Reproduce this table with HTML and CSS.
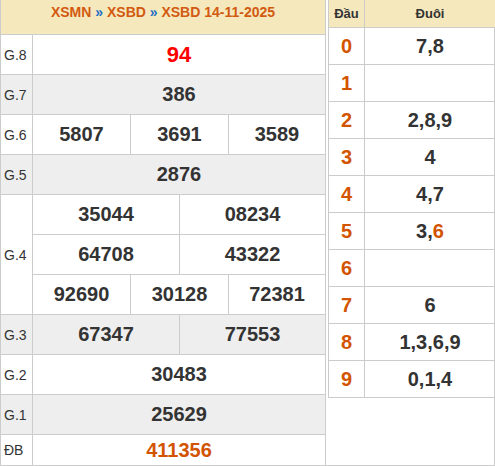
FILE: index.html
```html
<!DOCTYPE html>
<html lang="vi">
<head>
<meta charset="utf-8">
<title>XSBD 14-11-2025</title>
<link rel="stylesheet" href="styles.css">
</head>
<body>
<div class="wrap">
  <div class="kq">
    <div class="kq-head"><span class="lnk">XSMN</span> <span class="sep">»</span> <span class="lnk">XSBD</span> <span class="sep">»</span> <span class="lnk">XSBD 14-11-2025</span></div>

    <div class="lbl">G.8</div>
    <div class="num full g8">94</div>

    <div class="lbl gray">G.7</div>
    <div class="num full gray">386</div>

    <div class="lbl">G.6</div>
    <div class="num t1">5807</div>
    <div class="num t2">3691</div>
    <div class="num t3">3589</div>

    <div class="lbl gray">G.5</div>
    <div class="num full gray">2876</div>

    <div class="lbl span3">G.4</div>
    <div class="num h1">35044</div>
    <div class="num h2">08234</div>
    <div class="num h1">64708</div>
    <div class="num h2">43322</div>
    <div class="num t1">92690</div>
    <div class="num t2">30128</div>
    <div class="num t3">72381</div>

    <div class="lbl gray">G.3</div>
    <div class="num h1 gray">67347</div>
    <div class="num h2 gray">77553</div>

    <div class="lbl">G.2</div>
    <div class="num full">30483</div>

    <div class="lbl gray">G.1</div>
    <div class="num full gray">25629</div>

    <div class="lbl">ĐB</div>
    <div class="num full db">411356</div>
  </div>

  <div class="side">
    <div class="lt">
      <div class="lt-h dau">Đầu</div>
      <div class="lt-h duoi">Đuôi</div>

      <div class="d">0</div><div class="t">7,8</div>
      <div class="d">1</div><div class="t"></div>
      <div class="d">2</div><div class="t">2,8,9</div>
      <div class="d">3</div><div class="t">4</div>
      <div class="d">4</div><div class="t">4,7</div>
      <div class="d">5</div><div class="t">3,<span class="hl">6</span></div>
      <div class="d">6</div><div class="t"></div>
      <div class="d">7</div><div class="t">6</div>
      <div class="d">8</div><div class="t">1,3,6,9</div>
      <div class="d">9</div><div class="t">0,1,4</div>
    </div>
  </div>
</div>
</body>
</html>
```

FILE: styles.css
```css
* { box-sizing: border-box; }
html, body { margin: 0; padding: 0; background: #fff; }
body {
  font-family: "Liberation Sans", Arial, sans-serif;
  color: #333;
}
.wrap {
  display: flex;
  width: 495px;
  height: 466px;
}

/* left results grid */
.kq {
  width: 326px;
  display: grid;
  grid-template-columns: 32px 98px 49px 49px 97px;
  grid-template-rows: 35px repeat(10, 40px) 31px;
  border-left: 1px solid #ccc;
}
.kq > div {
  border-right: 1px solid #ccc;
  border-bottom: 1px solid #ccc;
}
.kq-head {
  grid-column: 1 / -1;
  background: #f6e8bd;
  text-align: center;
  font-weight: bold;
  font-size: 14px;
  line-height: 16px;
  padding-top: 4px;
  color: #d15a10;
}
.kq-head .sep { color: #1f6fc5; }
.lbl {
  grid-column: 1 / 2;
  display: flex;
  align-items: center;
  padding-left: 3px;
  font-size: 14px;
  color: #333;
}
.span3 { grid-row: span 3; }
.num {
  display: flex;
  align-items: center;
  justify-content: center;
  font-weight: bold;
  font-size: 20px;
  color: #333;
}
.full { grid-column: 2 / 6; }
.t1 { grid-column: 2 / 3; }
.t2 { grid-column: 3 / 5; }
.t3 { grid-column: 5 / 6; }
.h1 { grid-column: 2 / 4; }
.h2 { grid-column: 4 / 6; }
.gray { background: #eeeeee; }
.g8 { color: #f00; font-size: 22px; }
.db { color: #d35400; }

/* right loto table */
.side {
  width: 169px;
  padding-left: 2px;
  border-right: 1px solid #ccc;
  border-bottom: 1px solid #ccc;
}
.lt {
  display: grid;
  grid-template-columns: 36px 130px;
  grid-template-rows: 28px repeat(10, 37px);
  border-left: 1px solid #ccc;
}
.lt > div {
  border-bottom: 1px solid #ccc;
  display: flex;
  align-items: center;
  justify-content: center;
}
.lt-h {
  background: #f6e8bd;
  font-weight: bold;
  font-size: 13px;
  color: #333;
  padding-bottom: 1px;
}
.dau, .d { border-right: 1px solid #ccc; }
.d {
  font-weight: bold;
  font-size: 20px;
  color: #d35400;
}
.t {
  font-weight: bold;
  font-size: 20px;
  color: #333;
}
.hl { color: #d35400; }
```
